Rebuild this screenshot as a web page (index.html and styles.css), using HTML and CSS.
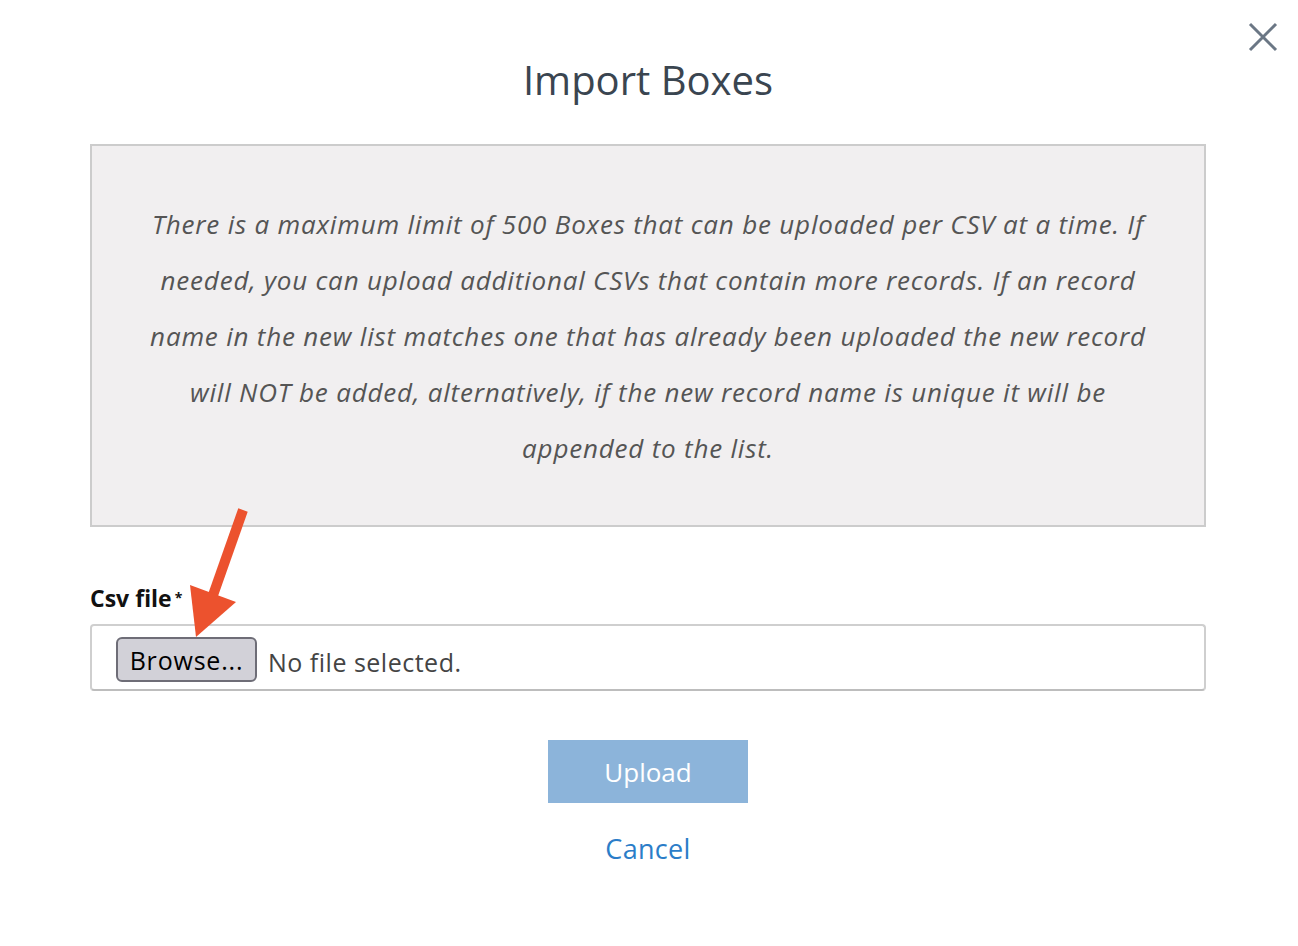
FILE: index.html
```html
<!DOCTYPE html>
<html>
<head lang="en">
    <meta charset="UTF-8">
    <title>Import Boxes</title>
    <link rel="stylesheet" href="styles.css">
</head>
<body>
<div class="modal">
    <a class="close" href="#">
        <svg width="30" height="30" viewBox="0 0 30 30">
            <path d="M2 2 L28 28 M28 2 L2 28" stroke="#6b7785" stroke-width="3" fill="none"/>
        </svg>
    </a>

    <h1 class="title">Import Boxes</h1>

    <div class="notice">
        <p>There is a maximum limit of 500 Boxes that can be uploaded per CSV at a time. If<br>
        needed, you can upload additional CSVs that contain more records. If an record<br>
        name in the new list matches one that has already been uploaded the new record<br>
        will NOT be added, alternatively, if the new record name is unique it will be<br>
        appended to the list.</p>
    </div>

    <div class="field">
        <label class="label">Csv file<span class="req">*</span></label>
        <div class="file">
            <span class="browse">Browse...</span>
            <span class="filename">No file selected.</span>
        </div>
    </div>

    <div class="actions">
        <button class="upload">Upload</button>
        <a class="cancel" href="#">Cancel</a>
    </div>

    <!-- annotation arrow -->
    <svg class="arrow" width="80" height="140" viewBox="0 0 80 140">
        <path d="M71 8 L40 96" stroke="#ec522e" stroke-width="10" fill="none"/>
        <polygon points="18,83 64,100 24,135" fill="#ec522e"/>
    </svg>
</div>
</body>
</html>
```

FILE: styles.css
```css
* {
    margin: 0;
    padding: 0;
    box-sizing: border-box;
}

body {
    background: #fff;
    font-family: "Open Sans", Lato, sans-serif;
}

.modal {
    position: relative;
    width: 1298px;
    height: 946px;
    padding: 56px 92px 0 90px;
}

.close {
    position: absolute;
    top: 22px;
    right: 20px;
    display: block;
    width: 30px;
    height: 30px;
}

.title {
    text-align: center;
    font-size: 40px;
    font-weight: 400;
    color: #3a4550;
    line-height: 48px;
    margin-bottom: 40px;
}

.notice {
    background: #f1eff0;
    border: 2px solid #cccccc;
    height: 383px;
    padding: 50px 20px;
}

.notice p {
    text-align: center;
    font-style: italic;
    font-size: 26px;
    letter-spacing: 0.8px;
    line-height: 56px;
    color: #555;
    white-space: nowrap;
}

.field {
    margin-top: 56px;
}

.label {
    display: block;
    font-size: 23px;
    font-weight: 700;
    color: #111;
    line-height: 30px;
    margin-bottom: 11px;
}

.req {
    font-size: 14px;
    vertical-align: top;
    margin-left: 3px;
}

.file {
    display: flex;
    align-items: center;
    height: 67px;
    border: 2px solid #cfcfcf;
    border-bottom-color: #bdbdbd;
    border-radius: 4px;
    padding-left: 24px;
    font-size: 25px;
}

.browse {
    display: flex;
    align-items: center;
    justify-content: center;
    width: 141px;
    height: 45px;
    background: #d2d1d8;
    border: 2px solid #6e6d77;
    border-radius: 6px;
    color: #000;
    letter-spacing: 0.8px;
    margin-top: 4px;
}

.filename {
    margin-left: 11px;
    margin-top: 8px;
    color: #444;
    letter-spacing: 0.5px;
}

.actions {
    display: flex;
    flex-direction: column;
    align-items: center;
    margin-top: 49px;
}

.upload {
    width: 200px;
    height: 63px;
    border: none;
    background: #8cb4da;
    color: #fff;
    font-family: "Open Sans", Lato, sans-serif;
    font-size: 26px;
}

.cancel {
    margin-top: 27px;
    color: #2b7dc8;
    font-size: 27px;
    letter-spacing: 0.3px;
    text-decoration: none;
}

.arrow {
    position: absolute;
    left: 172px;
    top: 502px;
}
```
